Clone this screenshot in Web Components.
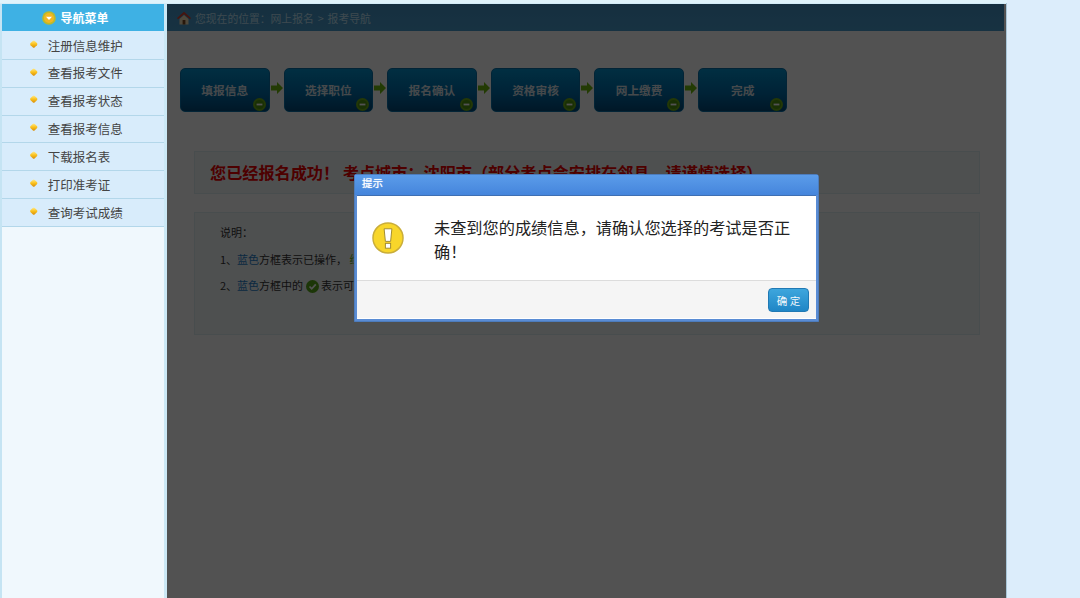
<!DOCTYPE html>
<html lang="zh"><head><meta charset="utf-8"><title>报考导航</title>
<style>
html,body{margin:0;height:598px;overflow:hidden;background:#dcedfb;font-family:"Noto Sans CJK SC","Liberation Sans",sans-serif;}
</style></head><body>
<x-app>
  <x-sidebar slot="side" title="导航菜单">
    <x-nav>注册信息维护</x-nav><x-nav>查看报考文件</x-nav><x-nav>查看报考状态</x-nav><x-nav>查看报考信息</x-nav><x-nav>下载报名表</x-nav><x-nav>打印准考证</x-nav><x-nav>查询考试成绩</x-nav>
  </x-sidebar>
  <x-main slot="main">
    <x-crumb>您现在的位置：网上报名 &gt; 报考导航</x-crumb>
    <x-steps>
      <x-step>填报信息</x-step><x-arrow></x-arrow><x-step>选择职位</x-step><x-arrow></x-arrow><x-step>报名确认</x-step><x-arrow></x-arrow><x-step>资格审核</x-step><x-arrow></x-arrow><x-step>网上缴费</x-step><x-arrow></x-arrow><x-step>完成</x-step>
    </x-steps>
    <x-panel kind="notice">您已经报名成功！ 考点城市：沈阳市（部分考点会安排在邻县，请谨慎选择）</x-panel>
    <x-panel kind="help">
      <p>说明：</p>
      <p>1、<x-b>蓝色</x-b>方框表示已操作， <x-g>绿色</x-g>方框表示未操作</p>
      <p>2、<x-b>蓝色</x-b>方框中的 <x-check></x-check> 表示可查看或修改</p>
    </x-panel>
  </x-main>
  <x-dialog slot="overlay" heading="提示" action="确 定">未查到您的成绩信息，请确认您选择的考试是否正确！</x-dialog>
</x-app>
<script>
function def(name, html){
  customElements.define(name, class extends HTMLElement{
    constructor(){super();this.attachShadow({mode:'open'}).innerHTML=typeof html==='function'?html(this):html;}
  });
}
def('x-app',`<style>
:host{display:block;width:1007px;height:598px;position:relative;box-sizing:border-box;padding-top:3px;background:#d3ecf8;overflow:hidden}
.row{display:flex;height:595px}
.side{width:167px;flex:none}
.main{flex:1;min-width:0;position:relative}
.mask{position:absolute;left:167px;right:1px;top:4px;bottom:0;background:rgba(0,0,0,.68)}
.edge{position:absolute;right:0;top:3px;bottom:0;width:1px;background:#a9c6d8}
.top{position:absolute;left:0;right:0;top:0;height:3px;background:#dff3fb}
</style><div class="top"></div><div class="row"><div class="side"><slot name="side"></slot></div><div class="main"><slot name="main"></slot></div></div><div class="edge"></div><div class="mask"></div><slot name="overlay"></slot>`);
def('x-sidebar',(h)=>`<style>
:host{display:block;box-sizing:border-box;height:100%;background:#f0f8fd;border-left:2px solid #c5e4f3;border-right:3px solid #cbe8f5}
.head{box-sizing:border-box;height:28px;margin-top:1px;background:#3eb1e4;border-bottom:1px solid #d8ecfb;color:#fff;font:bold 12px "Noto Sans CJK SC",sans-serif;display:flex;align-items:center;justify-content:center;gap:4px;padding-right:15px}
svg{width:14px;height:14px;flex:none}
</style><div class="head"><svg viewBox="0 0 14 14"><circle cx="7" cy="7" r="6.800" fill="#bdb92a"/><circle cx="7" cy="7" r="5" fill="#f2b722"/><path d="M4 5.800h6L7 9z" fill="#fff"/></svg><span>${h.getAttribute('title')}</span></div><slot></slot>`);
def('x-nav',`<style>
:host{display:flex;align-items:center;box-sizing:border-box;height:27.850px;background:#d8ecfb;border-bottom:1px solid #b3d7ea;color:#444;font:12.500px "Noto Sans CJK SC",sans-serif;padding-left:28.500px}
i{width:5.500px;height:5.500px;border-radius:1.500px;transform:rotate(45deg);flex:none;margin:-4px 11.800px 0 0;background:linear-gradient(135deg,#fff0a0,#fbc21c 50%,#d2860a)}
span{position:relative;top:-.4px}
</style><i></i><span><slot></slot></span>`);
def('x-main',`<style>:host{display:block;height:100%;background:#fff;font:12px "Noto Sans CJK SC",sans-serif;color:#000}</style><slot></slot>`);
def('x-crumb',`<style>
:host{display:flex;align-items:center;box-sizing:border-box;height:27px;margin:1px 3px 0 0;padding-left:10px;gap:4px;background:linear-gradient(#4394c6,#4a9ccc);color:#bfe2f5;font:10.800px "Noto Sans CJK SC",sans-serif;word-spacing:1.500px}
svg{width:14px;height:14px;flex:none}
</style><svg viewBox="0 0 14 14"><path d="M2.500 8 7 4l4.500 4v5.500h-9z" fill="#f3dfb6"/><path d="M7 .8 0 7l1 1.300L7 3.200l6 5.100L14 7z" fill="#d8402c"/><rect x="5.600" y="9" width="2.800" height="4.500" fill="#7a4a20"/></svg><slot></slot>`);
def('x-steps',`<style>:host{display:flex;align-items:center;padding:37px 0 0 13px}</style><slot></slot>`);
def('x-step',`<style>
:host{display:flex;align-items:center;justify-content:center;position:relative;box-sizing:border-box;width:89.500px;height:44px;flex:none;border-radius:5px;background:linear-gradient(#0590cc,#016aa6 60%,#014a7a);border:1px solid #0a72a8;padding-bottom:2px;color:#d8e2ea;font:bold 11.700px "Noto Sans CJK SC",sans-serif}
svg{position:absolute;right:3px;bottom:0;width:13px;height:13px}
</style><slot></slot><svg viewBox="0 0 13 13"><circle cx="6.500" cy="6.500" r="6.500" fill="#6fae16"/><circle cx="6.500" cy="6.500" r="4.600" fill="#4f9510"/><rect x="3.600" y="5.600" width="5.800" height="1.800" fill="#fff"/></svg>`);
def('x-arrow',`<style>:host{display:block;width:14.100px;height:14px;flex:none}svg{display:block;width:14px;height:14px;margin-top:-2px}</style><svg viewBox="0 0 14 14"><path d="M1 4.500h6V1l6 6-6 6V9.500H1z" fill="#6fb80e"/></svg>`);
def('x-panel',(h)=>`<style>
:host{display:block;box-sizing:border-box;margin-left:27px;width:786px;border:1px solid #dfeef3;background:#f3f7f9}
:host([kind=notice]){height:43px;margin-top:39px;padding:9px 0 0 15px;color:#f00000;font:bold 16.150px/22px "Noto Sans CJK SC",sans-serif;white-space:nowrap}
:host([kind=help]){height:123px;margin-top:18px;padding:11px 0 0 25px;font:11px/17px "Noto Sans CJK SC",sans-serif;color:#333}
::slotted(p){margin:0 0 9.600px}
</style><slot></slot>`);
def('x-b',`<style>:host{color:#2a7fc8}</style><slot></slot>`);
def('x-g',`<style>:host{color:#5fae1e}</style><slot></slot>`);
def('x-check',`<style>:host{display:inline-block;width:13px;height:13px;vertical-align:-3px}svg{display:block;width:13px;height:13px}</style><svg viewBox="0 0 13 13"><circle cx="6.500" cy="6.500" r="6.500" fill="#58a81a"/><path d="M3.500 6.500 5.700 8.800 9.800 4.300" fill="none" stroke="#fff" stroke-width="1.800"/></svg>`);
def('x-dialog',(h)=>`<style>
:host{position:absolute;left:354px;top:174px;width:465px;height:148px;box-sizing:border-box;display:flex;flex-direction:column;background:#5a8cd4;border:1px solid #4d7cbc;border-radius:2px 3px 0 0;padding:0 2px 2px 2px;color:#222;font-family:"Noto Sans CJK SC",sans-serif}
.title{height:20px;flex:none;margin:0 -2px;padding-left:7px;background:linear-gradient(#5b9ce9,#4585dc);color:#fff;font-size:10.500px;line-height:16px;text-shadow:0 0 1px #fff}
.body{flex:1;min-height:0;display:flex;background:#fff;border-top:1px solid #3f6fb2;box-sizing:border-box;padding:0 24px 0 15px}
svg{width:32px;height:32px;flex:none;margin-top:26px}
.msg{margin:19px 0 0 30px;font-size:16.200px;line-height:24px}
.foot{height:39px;flex:none;box-sizing:border-box;background:#f5f5f5;border-top:1px solid #dcdcdc;border-bottom:1px solid #fff;display:flex;justify-content:flex-end;align-items:flex-start;padding:7px 7px 0 0}
button{width:41px;height:24px;padding:0;border:1px solid #2079b4;border-radius:4px;background:linear-gradient(#3ea6dd,#1f86c6);color:#f2f8fc;font:10.500px "Noto Sans CJK SC",sans-serif}
</style><div class="title">${h.getAttribute('heading')}</div><div class="body"><svg viewBox="0 0 33 33"><circle cx="16.500" cy="16.500" r="15.500" fill="#f8d62a" stroke="#c9ad3a" stroke-width="1.500"/><path d="M12.500 7h8l-1.300 13h-5.400z" fill="#fff" stroke="#a08a2e" stroke-width="1"/><rect x="13.800" y="22" width="5.400" height="5" fill="#fff" stroke="#a08a2e" stroke-width="1"/></svg><div class="msg"><slot></slot></div></div><div class="foot"><button>${h.getAttribute('action')}</button></div>`);
</script>
</body></html>
